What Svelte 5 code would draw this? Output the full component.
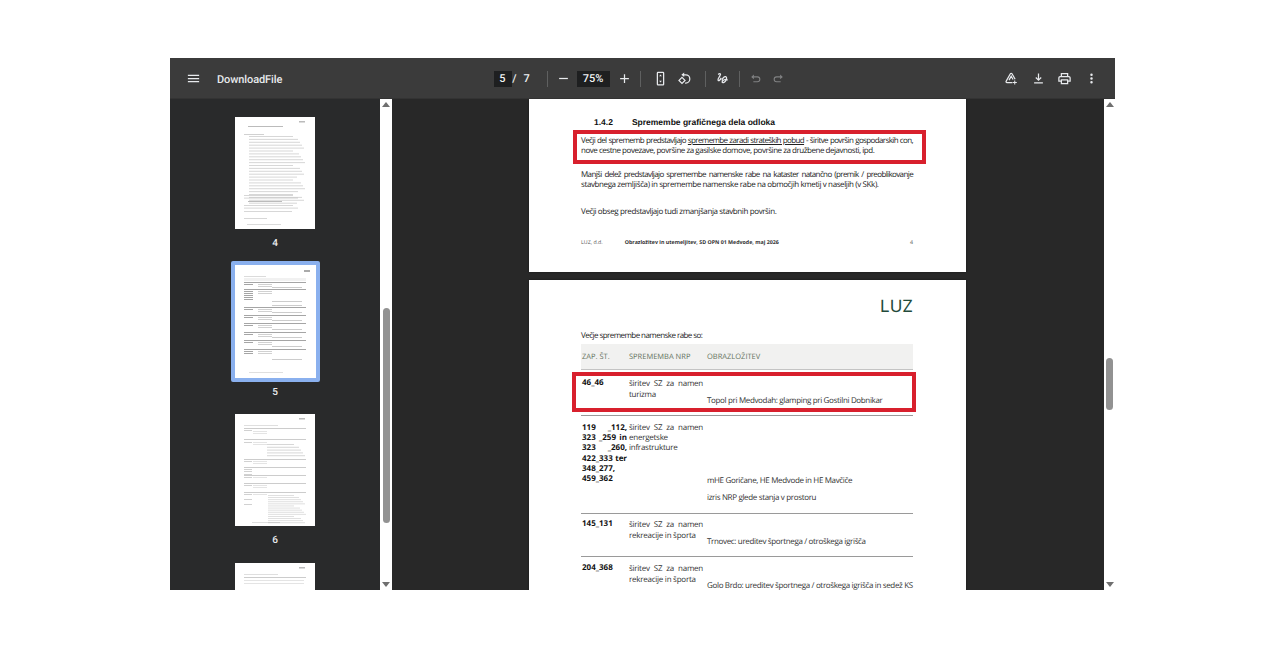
<script>
  const lines = (start, count, step, x = 6, w = 68, h = 1, o = 0.35) =>
    Array.from({ length: count }, (_, i) => ({ x, y: start + i * step, w: w - ((i * 17) % 5 === 0 ? 12 : (i * 7) % 9), h, o }));

  const thumb4 = [
    { x: 13, y: 9, w: 35, h: 1, o: 0.6 }, { x: 64, y: 4, w: 6, h: 1.5, o: 0.6 },
    { x: 9, y: 17, w: 20, h: 1, o: 0.4 },
    ...lines(19, 24, 2.9, 14, 56),
    { x: 13, y: 84, w: 34, h: 1, o: 0.6 },
    ...lines(78, 2, 2.6, 9, 61),
    ...lines(88, 2, 2.6, 9, 61), ...lines(94, 1, 2.6, 9, 60), ...lines(101, 1, 2, 9, 35),
    { x: 12, y: 107, w: 34, h: 0.8, o: 0.4 }
  ];
  const thumb5 = [
    { x: 69, y: 5, w: 6, h: 2, o: 0.75 }, { x: 9, y: 11, w: 22, h: 0.8, o: 0.4 },
    { x: 9, y: 13, w: 62, h: 3, o: 0.12 },
    ...[17, 24, 42, 50, 58, 67, 75, 84].map((y) => ({ x: 9, y, w: 62, h: 1, o: 0.8 })),
    ...[19, 26, 28, 30, 32, 34, 44, 52, 60, 69, 77, 86, 88].map((y) => ({ x: 9, y, w: 9, h: 1, o: 0.8 })),
    ...[19, 21, 26, 28, 44, 46, 52, 54, 60, 62, 69, 71, 77, 79, 86, 88].map((y) => ({ x: 23, y, w: 14, h: 0.8, o: 0.5 })),
    ...[22, 36, 40, 47, 55, 64, 72, 81, 94].map((y) => ({ x: 37, y, w: 30, h: 0.9, o: 0.5 })),
    { x: 14, y: 107, w: 34, h: 0.8, o: 0.35 }
  ];
  const thumb6 = [
    { x: 64, y: 4, w: 6, h: 1.5, o: 0.6 }, { x: 9, y: 11, w: 34, h: 0.8, o: 0.35 },
    ...[14, 25, 45, 53, 61, 69, 78].map((y) => ({ x: 9, y, w: 62, h: 1, o: 0.45 })),
    ...[16, 28, 47, 55, 57, 60, 63, 71, 80, 85, 90].map((y) => ({ x: 9, y, w: 8, h: 0.8, o: 0.5 })),
    ...[17, 19, 28, 30, 47, 49, 63, 71, 73, 80].map((y) => ({ x: 18, y, w: 14, h: 0.8, o: 0.3 })),
    ...lines(30, 5, 2.8, 32, 39), ...lines(81, 14, 2.1, 33, 38, 0.9, 0.3),
    { x: 17, y: 108, w: 28, h: 0.8, o: 0.35 }
  ];
  const thumb7 = [
    { x: 64, y: 4, w: 6, h: 1.5, o: 0.6 }, { x: 9, y: 11, w: 34, h: 0.8, o: 0.35 },
    { x: 9, y: 14, w: 62, h: 1, o: 0.45 }, { x: 9, y: 17, w: 60, h: 0.8, o: 0.3 }, { x: 9, y: 20, w: 60, h: 0.8, o: 0.3 }
  ];

  const rows = [
    { num: ['46_46'], change: 'širitev SZ za namen turizma', notes: ['Topol pri Medvodah: glamping pri Gostilni Dobnikar'], cls: 'r1' },
    { num: ['119 _112,', '323 _259 in', '323 _260,', '422_333 ter', '348_277,', '459_362'], spread: 4, change: 'širitev SZ za namen energetske infrastrukture', notes: ['mHE Goričane, HE Medvode in HE Mavčiče', 'izris NRP glede stanja v prostoru'], cls: 'r2' },
    { num: ['145_131'], change: 'širitev SZ za namen rekreacije in športa', notes: ['Trnovec: ureditev športnega / otroškega igrišča'], cls: 'r3' },
    { num: ['204_368'], change: 'širitev SZ za namen rekreacije in športa', notes: ['Golo Brdo: ureditev športnega / otroškega igrišča in sedež KS'], cls: 'r4' }
  ];
</script>

{#snippet thumb(items, width = 80, height = 112)}
  <svg class="thumb-svg" {width} {height} viewBox="0 0 {width} {height}">
    <rect {width} {height} fill="#fff" />
    <g opacity="0.55">
      {#each items as l}
        <rect x={l.x} y={l.y} width={l.w} height={l.h} fill="#333" opacity={l.o} />
      {/each}
    </g>
  </svg>
{/snippet}

<div class="viewer">
  <header class="toolbar">
    <div class="tb-left">
      <svg class="ico menu" viewBox="0 0 24 24"><path d="M3 18h18v-2H3v2zm0-5h18v-2H3v2zm0-7v2h18V6H3z" /></svg>
      <span class="title">DownloadFile</span>
    </div>
    <div class="tb-center">
      <span class="num-box">5</span>
      <span class="slash">/</span>
      <span class="total">7</span>
      <span class="sep s1"></span>
      <svg class="ico b-minus" viewBox="0 0 24 24"><path d="M5 11h14v2H5z" /></svg>
      <span class="zoom-box">75%</span>
      <svg class="ico b-plus" viewBox="0 0 24 24"><path d="M19 13h-6v6h-2v-6H5v-2h6V5h2v6h6v2z" /></svg>
      <span class="sep s2"></span>
      <svg class="ico b-fit" viewBox="0 0 24 24"><path d="M16 1H8a2 2 0 0 0-2 2v18a2 2 0 0 0 2 2h8a2 2 0 0 0 2-2V3a2 2 0 0 0-2-2zm0 20H8V3h8v18zM12 5.500 9.800 8.500h4.400zM12 18.500l2.200-3H9.800z" /></svg>
      <svg class="ico b-rot" viewBox="0 0 24 24"><path class="line" d="M10 6.200h4a6.500 6.500 0 0 1 0 13h-1" /><path d="M11.500 2.500v7L7 6z" /><path class="line" d="M8 10.200 3.200 15 8 19.800 12.800 15z" /></svg>
      <span class="sep s3"></span>
      <svg class="ico b-ann" viewBox="0 0 24 24"><path class="line" d="M5 5.500c3-2.500 5-1 3 2-1.500 2.500-4 5.500-3 7.500 1 1.500 3.500-1 5-4" /><path class="line" d="M11 15c1-3.500 4-6.500 6-6s2 3.500.5 6-4 4.500-5.500 3.500.5-3.500 3-4.500 4.500-.5 5 1" /></svg>
      <span class="sep s4"></span>
      <svg class="ico dim b-undo" viewBox="0 0 24 24"><path class="line" d="M8 9h7.500a4.500 4.500 0 0 1 0 9H8" /><path d="M9 4.500v9L4 9z" /></svg>
      <svg class="ico dim b-redo" viewBox="0 0 24 24"><path class="line" d="M16 9H8.500a4.500 4.500 0 0 0 0 9H16" /><path d="M15 4.500v9L20 9z" /></svg>
    </div>
    <div class="tb-right">
      <svg class="ico i-drive" viewBox="0 0 24 24"><path class="line" d="M10.200 4.500 3.500 16.200a1.500 1.500 0 0 0 1.300 2.300h8.700M10.200 4.500a1.500 1.500 0 0 1 2.600 0l5 8.800M8 14.500l3.500-6 3 5.200" /><path d="M18 15v2.500h2.500v1.600H18v2.400h-1.600v-2.400H14v-1.600h2.400V15z" /></svg>
      <svg class="ico i-down" viewBox="0 0 24 24"><path d="M13 4v8.200l2.600-2.600L17 11l-5 5-5-5 1.400-1.400 2.600 2.600V4zM5 18h14v2H5z" /></svg>
      <svg class="ico i-print" viewBox="0 0 24 24"><path d="M19 8h-1V3H6v5H5c-1.660 0-3 1.340-3 3v6h4v4h12v-4h4v-6c0-1.660-1.340-3-3-3zM8 5h8v3H8V5zm8 14H8v-4h8v4zm4-4h-2v-2H6v2H4v-4c0-.550.450-1 1-1h14c.550 0 1 .450 1 1v4z" /></svg>
      <svg class="ico" viewBox="0 0 24 24"><path d="M12 8a2 2 0 1 0 0-4 2 2 0 0 0 0 4zm0 2a2 2 0 1 0 0 4 2 2 0 0 0 0-4zm0 6a2 2 0 1 0 0 4 2 2 0 0 0 0-4z" /></svg>
    </div>
  </header>

  <div class="body">
    <aside class="sidebar">
      <div class="thumbs">
        <figure class="tf t4">{@render thumb(thumb4)}<figcaption>4</figcaption></figure>
        <figure class="tf t5"><div class="selected">{@render thumb(thumb5, 81, 113)}</div><figcaption>5</figcaption></figure>
        <figure class="tf t6">{@render thumb(thumb6)}<figcaption>6</figcaption></figure>
        <figure class="tf t7">{@render thumb(thumb7, 80, 40)}</figure>
      </div>
    </aside>
    <div class="scrollbar side">
      <span class="arrow up"></span>
      <span class="sb-thumb"></span>
      <span class="arrow down"></span>
    </div>

    <main class="main">
      <article class="page p1">
        <h2><span>1.4.2</span><span>Spremembe grafičnega dela odloka</span></h2>
        <div class="red-box first">
          <span class="ln fill">Večji del sprememb predstavljajo <u>spremembe zaradi strateških pobud</u> - širitve površin gospodarskih con,</span>
          <span class="ln tight">nove cestne povezave, površine za gasilske domove, površine za družbene dejavnosti, ipd.</span>
        </div>
        <p class="para two">
          <span class="ln fill">Manjši delež predstavljajo spremembe namenske rabe na kataster natančno (premik / preoblikovanje</span>
          <span class="ln">stavbnega zemljišča) in spremembe namenske rabe na območjih kmetij v naseljih (v SKk).</span>
        </p>
        <p class="para last">Večji obseg predstavljajo tudi zmanjšanja stavbnih površin.</p>
        <footer class="pf"><span class="pf-a">LUZ, d.d.</span><b>Obrazložitev in utemeljitev, SD OPN 01 Medvode, maj 2026</b><span class="pf-n">4</span></footer>
      </article>

      <article class="page p2">
        <div class="logo-row"><span class="logo">LUZ</span></div>
        <p class="intro">Večje spremembe namenske rabe so:</p>
        <div class="thead"><span>ZAP. ŠT.</span><span>SPREMEMBA NRP</span><span>OBRAZLOŽITEV</span></div>
        {#each rows as r}
          <div class="row {r.cls}">
            <div class="c-num">{#each r.num as n, i}<div class:fill={i < (r.spread ?? 0)}>{n}</div>{/each}</div>
            <div class="c-change">{r.change}</div>
            <div class="c-notes">{#each r.notes as n}<div>{n}</div>{/each}</div>
          </div>
        {/each}
        <div class="red-box second"></div>
      </article>
    </main>
    <div class="scrollbar mainbar">
      <span class="arrow up"></span>
      <span class="sb-thumb"></span>
      <span class="arrow down"></span>
    </div>
  </div>
</div>

<style>
  :global(body) { margin: 0; background: #fff; }
  .viewer {
    width: 945px; height: 532px; margin: 58px 0 58px 170px;
    display: flex; flex-direction: column; overflow: hidden;
    font-family: "Open Sans", "Liberation Sans", sans-serif;
    text-rendering: geometricPrecision;
  }
  .toolbar {
    height: 41px; flex: none; background: #3b3b3b; color: #f1f3f4;
    display: grid; grid-template-columns: 1fr auto 1fr; align-items: center;
    box-shadow: inset 0 -1px 0 #333;
  }
  .ico { width: 15px; height: 15px; fill: #e8eaed; flex: none; }
  .ico .line { fill: none; stroke: #e8eaed; stroke-width: 2; }
  .dim { opacity: .4; }
  .tb-left { display: flex; align-items: center; padding-left: 16px; }
  .title { margin-left: 16px; padding-top: 2px; font: 500 11px/1 Roboto, sans-serif; letter-spacing: -.1px; color: #e8eaed; }
  .tb-center { display: flex; align-items: center; height: 100%; width: 298px; font: 500 11px/1 Roboto, sans-serif; }
  .num-box { width: 18px; height: 16px; background: #1e1f20; text-align: center; line-height: 16px; }
  .slash { width: 6px; text-align: center; margin-left: 0; margin-right: 6px; }
  .total { width: 6px; }
  .sep { width: 1px; height: 16px; background: #5f6060; flex: none; }
  .s1 { margin-left: 17px; }
  .b-minus { margin-left: 8px; }
  .zoom-box { width: 33px; height: 16px; background: #1e1f20; margin-left: 6px; text-align: center; line-height: 16px; }
  .b-plus { margin-left: 7px; }
  .s2 { margin-left: 8px; }
  .b-fit { margin-left: 12px; }
  .b-rot { margin-left: 9px; }
  .s3 { margin-left: 13px; }
  .b-ann { margin-left: 9px; }
  .s4 { margin-left: 9px; }
  .b-undo { margin-left: 9px; width: 13px; height: 13px; }
  .b-redo { margin-left: 10px; width: 13px; height: 13px; }
  .tb-right { display: flex; justify-content: flex-end; align-items: center; gap: 12px; padding-right: 16px; }
  .i-down { margin-right: -1px; }

  .body { flex: 1; display: flex; min-height: 0; }
  .sidebar { width: 210px; flex: none; background: #292a2b; overflow: hidden; }
  .thumbs { display: flex; flex-direction: column; align-items: center; padding-top: 18px; }
  .tf { margin: 0; display: flex; flex-direction: column; align-items: center; }
  .thumb-svg { display: block; }
  figcaption { color: #e8eaed; font: 500 10px/12px Roboto, sans-serif; margin-top: 9px; }
  .t5 { margin-top: 11px; }
  .t5 figcaption { margin-top: 5px; }
  .selected { border: 4px solid #8ab0ee; border-radius: 2px; }
  .t6 { margin-top: 15px; }
  .t7 { margin-top: 16px; }

  .scrollbar { position: relative; background: #fff; flex: none; display: flex; flex-direction: column; align-items: center; }
  .side { width: 12px; }
  .mainbar { width: 11px; }
  .arrow { width: 0; height: 0; border-left: 4px solid transparent; border-right: 4px solid transparent; position: absolute; left: 50%; margin-left: -4px; }
  .up { top: 3px; border-bottom: 5px solid #6f6f6f; }
  .down { bottom: 3px; border-top: 5px solid #6f6f6f; }
  .sb-thumb { background: #929292; width: 7px; border-radius: 4px; }
  .side .sb-thumb { height: 215px; margin-top: 209px; }
  .mainbar .sb-thumb { height: 52px; margin-top: 259px; }

  .main { flex: 1; background: #282828; overflow: hidden; min-width: 0; display: flex; flex-direction: column; align-items: flex-start; gap: 8px; padding-left: 137px; }
  .page { width: 437px; background: #fff; flex: none; box-sizing: border-box; padding: 0 53px 0 52px; color: #222; font-size: 8px; line-height: 10px; letter-spacing: -.39px; position: relative; box-shadow: 0 0 2px #0006; }
  .page p { margin: 0; }
  .p1 { height: 173px; }
  h2 { margin: 0; padding-top: 17px; padding-left: 13px; display: flex; gap: 19px; font: 700 8.500px/12px "Liberation Sans", sans-serif; letter-spacing: 0; color: #111; }
  .ln { display: block; white-space: nowrap; }
  .tight { letter-spacing: -.47px; }
  .ln.fill { letter-spacing: -.62px; }
  .fill { text-align: justify; text-align-last: justify; white-space: normal; }
  .red-box { border: 4px solid #d8202d; box-sizing: border-box; }
  .red-box.first { margin: 2px -13px 0 -8px; padding: 2px 9px 2px 4px; height: 34px; }
  .page .para.two { margin-top: 6px; }
  .page .para.last { margin-top: 17px; }
  .pf { display: flex; margin-top: 21px; font-size: 5.300px; line-height: 8px; color: #555; letter-spacing: 0; }
  .pf b { color: #333; margin-left: 22px; font-weight: 700; }
  .pf-n { margin-left: auto; }

  .p2 { flex: 1; }
  .logo-row { display: flex; justify-content: flex-end; padding-top: 19px; height: 32px; }
  .logo { font: 400 17px/17px Inter, sans-serif; color: #234a3a; letter-spacing: 0; }
  .page .intro { letter-spacing: -.55px; }
  .thead { margin-top: 3px; height: 26px; background: #f1f1f0; display: grid; grid-template-columns: 47px 78px 1fr; align-items: center; padding-left: 1px; box-sizing: border-box; color: #66735f; font-size: 7.500px; letter-spacing: 0; border-bottom: 1px solid #c4c4c4; }
  .row { display: grid; grid-template-columns: 47px 78px 1fr; padding-left: 1px; border-bottom: 1.500px solid #9a9a9a; box-sizing: border-box; }
  .c-num { font-weight: 700; color: #111; letter-spacing: 0; line-height: 10.200px; width: 45px; white-space: nowrap; }
  .c-num .fill { white-space: normal; }
  .c-change { width: 74px; text-align: justify; line-height: 11px; color: #333; letter-spacing: -.25px; }
  .c-notes { color: #333; letter-spacing: -.34px; white-space: nowrap; }
  .r1 { height: 46px; padding-top: 8px; }
  .r2 { height: 98px; padding-top: 7px; }
  .r2 .c-change { line-height: 10.200px; }
  .r3 { height: 43px; padding-top: 5px; }
  .r4 { height: 46px; padding-top: 6px; }
  .r1 .c-notes { padding-top: 18px; }
  .r2 .c-notes { padding-top: 53px; }
  .r2 .c-notes div + div { margin-top: 7px; }
  .r3 .c-notes, .r4 .c-notes { padding-top: 18px; }
  .red-box.second { position: absolute; left: 43px; top: 92px; width: 344px; height: 40px; }
</style>
